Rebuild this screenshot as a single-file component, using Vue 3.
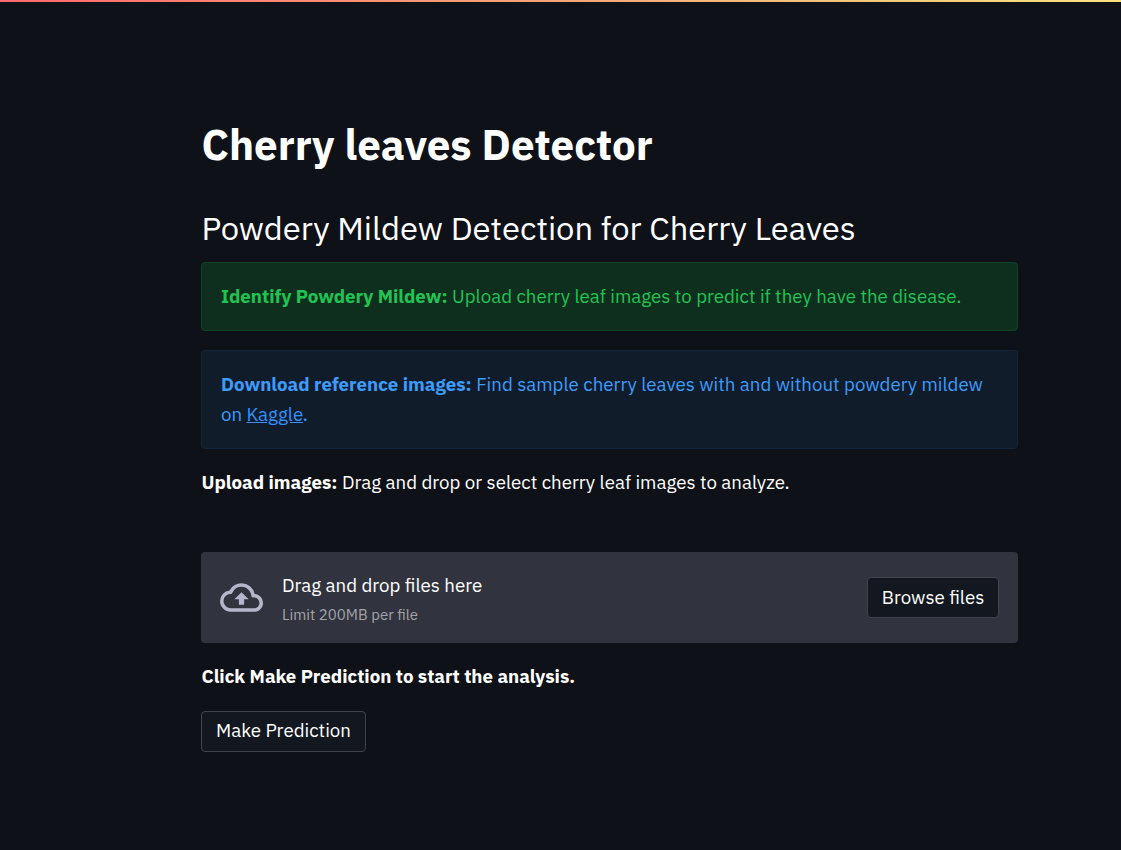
<script setup>
const title = 'Cherry leaves Detector'
</script>

<template>
  <div class="page">
    <div class="rainbow"></div>
    <main>
      <h1>{{ title }}</h1>
      <h2>Powdery Mildew Detection for Cherry Leaves</h2>
      <section class="note success">
        <p><b>Identify Powdery Mildew:</b> Upload cherry leaf images to predict if they have the disease.</p>
      </section>
      <section class="note info">
        <p><b>Download reference images:</b> Find sample cherry leaves with and without powdery mildew</p>
        <p>on <a href="#">Kaggle</a>.</p>
      </section>
      <p class="text upload"><b>Upload images:</b> Drag and drop or select cherry leaf images to analyze.</p>
      <section class="drop">
        <svg class="cloud" viewBox="0 0 24 24" fill="currentColor"><path d="M19.35 10.04A7.49 7.49 0 0 0 12 4C9.11 4 6.6 5.64 5.35 8.04A5.994 5.994 0 0 0 0 14c0 3.31 2.69 6 6 6h13c2.76 0 5-2.24 5-5 0-2.64-2.05-4.78-4.65-4.96zM19 18H6c-2.21 0-4-1.79-4-4 0-2.05 1.53-3.76 3.56-3.97l1.07-.11.5-.95A5.469 5.469 0 0 1 12 6c2.62 0 4.88 1.86 5.39 4.43l.3 1.5 1.53.11A2.98 2.98 0 0 1 22 15c0 1.65-1.35 3-3 3zM8 13h2.55v3h2.9v-3H16l-4-4z"/></svg>
        <div class="hint">
          <span>Drag and drop files here</span>
          <small>Limit 200MB per file</small>
        </div>
        <button>Browse files</button>
      </section>
      <p class="text click"><b>Click Make Prediction to start the analysis.</b></p>
      <button class="predict">Make Prediction</button>
    </main>
  </div>
</template>

<style>
body { margin: 0; background: #0e1117; }
</style>

<style scoped>
.page { height: 850px; overflow: hidden; background: #0e1117; color: #fff; font-family: "IBM Plex Sans", "Noto Sans", "Open Sans", sans-serif; font-size: 18.72px; }
.rainbow { height: 2px; background: linear-gradient(90deg, #fa696d, #fbe27f); }
main { width: 817px; margin-left: 201px; }
h1, h2, p { margin: 0; white-space: nowrap; }
h1 { padding: 118px 0 0 0.5px; height: 50px; line-height: 50px; font-size: 42.12px; font-weight: 700; }
h2 { margin-top: 35px; padding-left: 0.5px; height: 46px; line-height: 46px; font-size: 32.76px; font-weight: 400; }
.note { box-sizing: border-box; height: 69px; margin-top: 11px; padding: 18px 19px; border: 1px solid; border-radius: 4px; line-height: 30px; }
.success { background: #0e2f1e; border-color: #0f4526; color: #21c354; }
.info { height: 99px; margin-top: 19px; background: #111c2b; border-color: #11263c; color: #3d9bfb; }
a { color: #3291fd; }
.text { padding-left: 0.5px; line-height: 30px; }
.upload { margin-top: 18px; }
.drop { display: flex; align-items: center; box-sizing: border-box; height: 91px; margin-top: 55px; padding: 0 19px; background: #31333f; border-radius: 4px; }
.cloud { width: 43px; height: 43px; margin-right: 19px; color: #b5b6c9; }
.hint { display: flex; flex: 1; flex-direction: column; padding-top: 3px; line-height: 30px; }
small { height: 28px; line-height: 30px; font-size: 14.98px; color: #a3a4aa; }
button { box-sizing: border-box; width: 132px; height: 41px; padding: 0 0 1px; border: 1px solid #41434c; border-radius: 4px; background: #131720; color: #fff; font: inherit; white-space: nowrap; }
.click { margin-top: 18px; }
.predict { width: 165px; margin-top: 20px; padding-bottom: 3px; }
</style>
